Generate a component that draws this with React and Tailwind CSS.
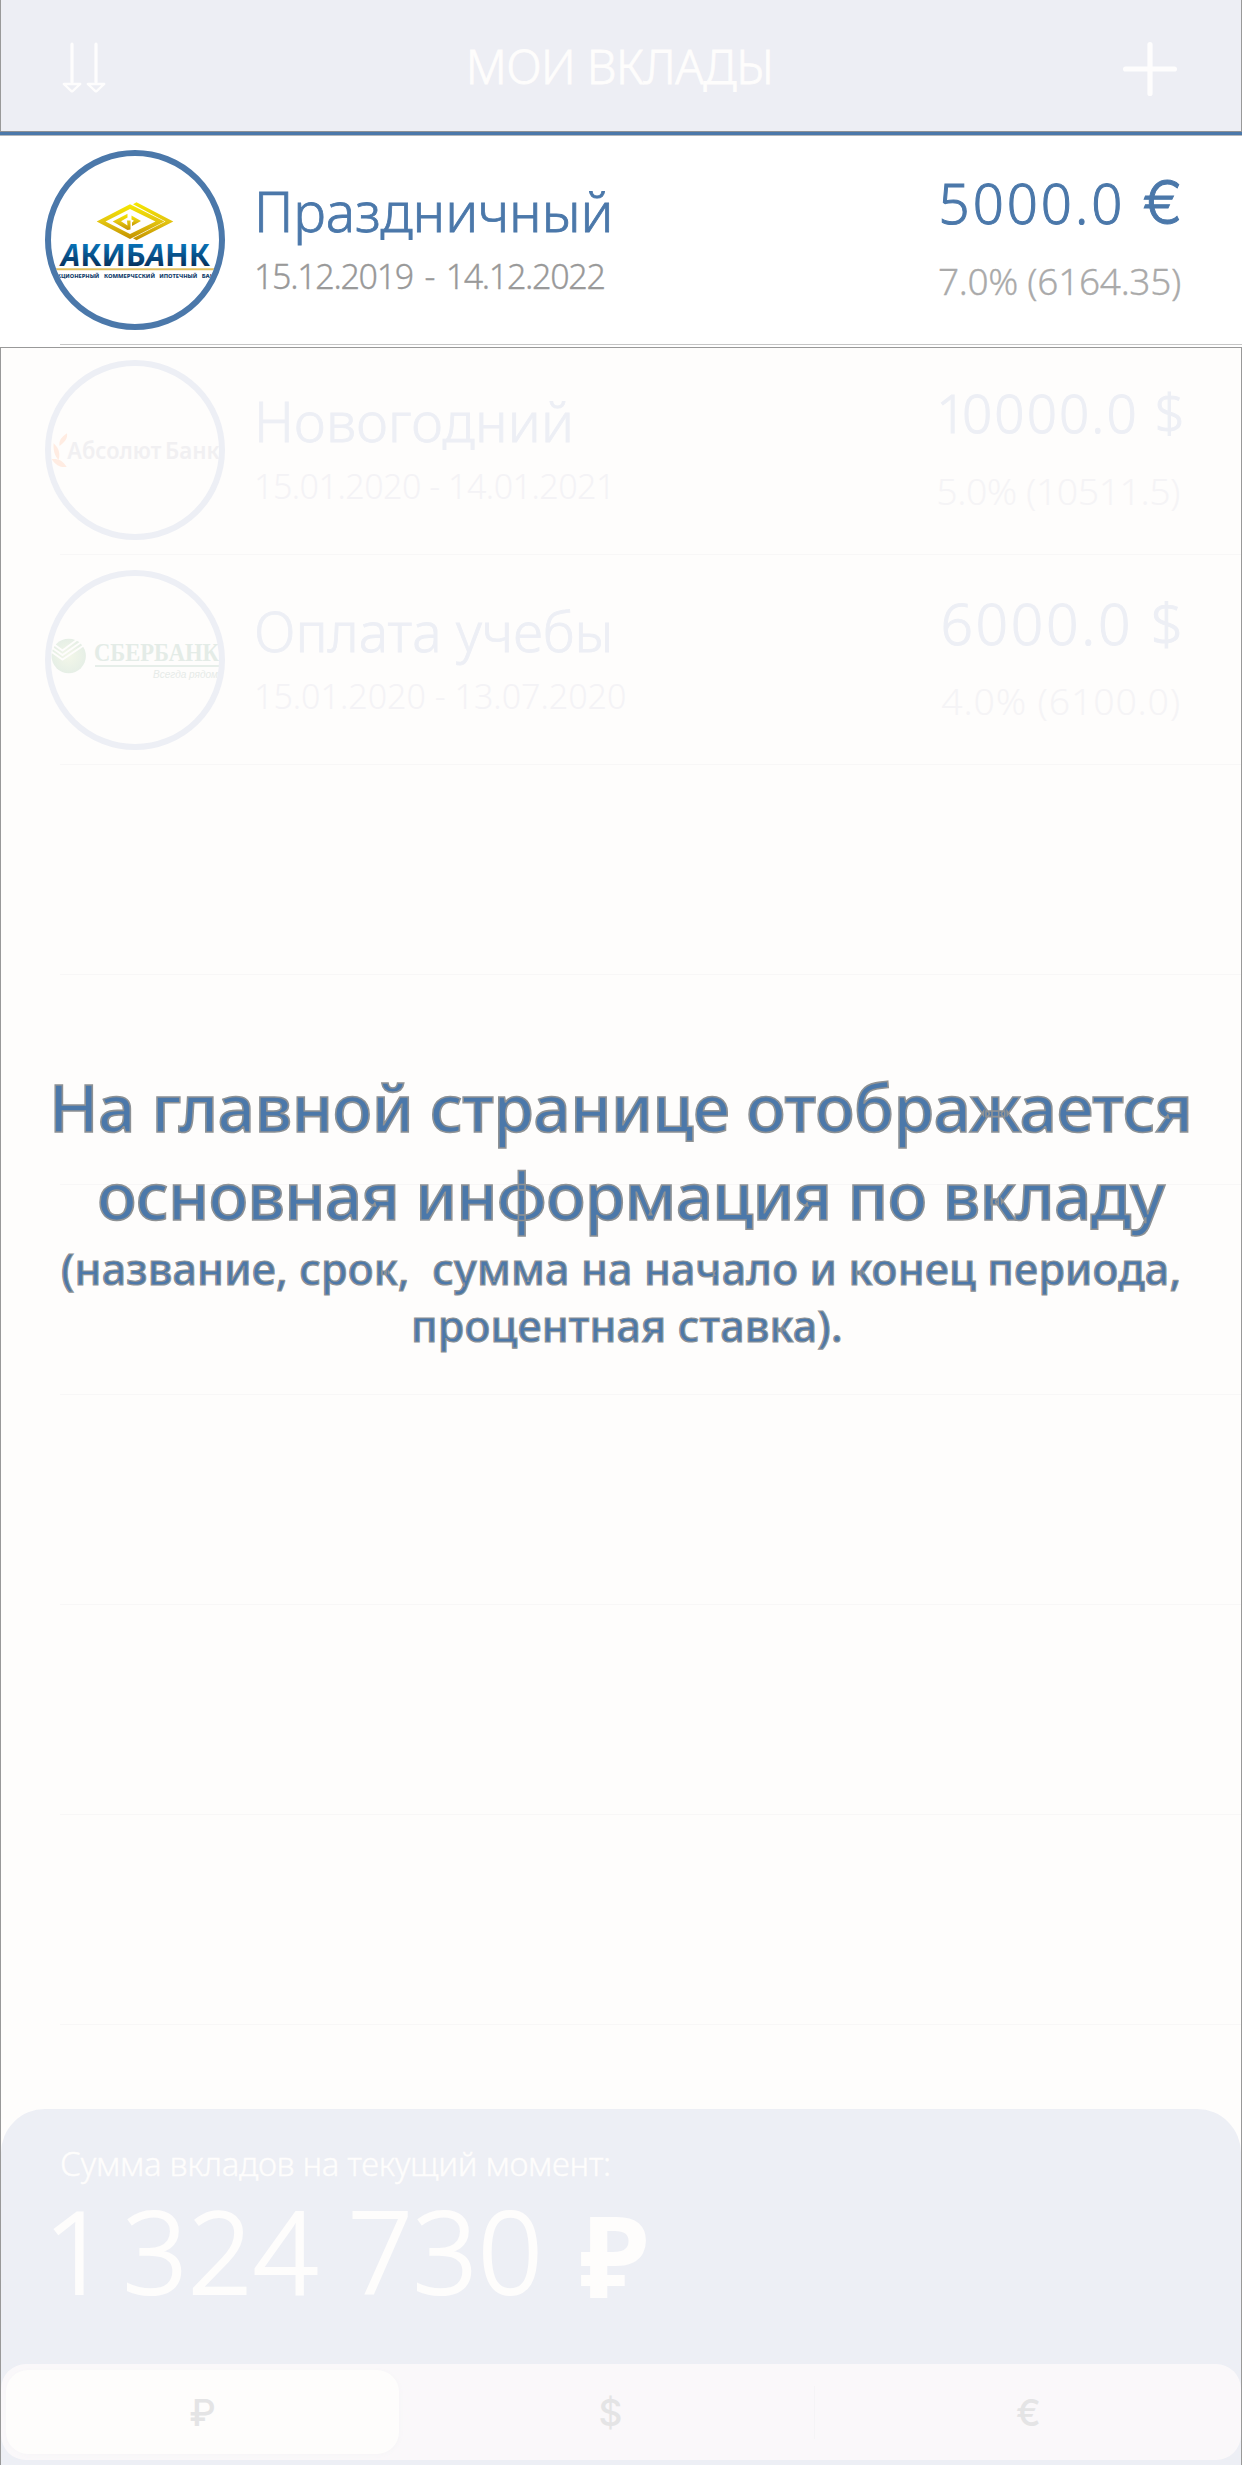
function SortIcon() {
  return (
    <svg className="h-[54px] w-[48px]" viewBox="0 0 48 54" fill="none" stroke="#fefdfd" strokeLinecap="round" strokeLinejoin="round">
      <path d="M12 4.2V42M36 4.2V42" strokeWidth="3.2" />
      <path d="M3.8 44H20.2L12.6 51.2H11.4ZM27.8 44H44.2L36.6 51.2H35.4Z" strokeWidth="2.4" />
    </svg>
  );
}

function PlusIcon() {
  return (
    <svg className="h-[54px] w-[54px]" viewBox="0 0 54 54" fill="none" stroke="#fefdfd" strokeWidth="5.2" strokeLinecap="round">
      <path d="M27 2.6V51.4M2.6 27H51.4" />
    </svg>
  );
}

function AkibankLogo() {
  return (
    <svg className="h-[180px] w-[180px]" viewBox="0 0 180 180">
      <defs>
        <linearGradient id="gold" x1="0" y1="0" x2="0" y2="1">
          <stop offset="0" stopColor="#f6e800" />
          <stop offset="0.5" stopColor="#e3c410" />
          <stop offset="1" stopColor="#c39100" />
        </linearGradient>
        <linearGradient id="navy" x1="0" y1="0" x2="0" y2="1">
          <stop offset="0.25" stopColor="#0873b8" />
          <stop offset="0.8" stopColor="#07305c" />
        </linearGradient>
        <clipPath id="disc"><circle cx="90" cy="90" r="84" /></clipPath>
      </defs>
      <g fill="url(#gold)" fillRule="evenodd">
        <path d="M51.7 71.6L85 54.3L119.5 71.6L85 89ZM60.5 71.6L85 84L110.5 71.6L85 59Z" />
        <path d="M88 54.3L91.5 52.3L128.3 71.6L91.5 90.3L88 88.3L120.5 71.6Z" />
        <path d="M67.7 71.6L82.5 63.8V67.5L76 71.3L82.5 75.5L82 70.5H85.5V79.5L82.5 80Z" />
        <path d="M86.5 65.5L96 71L87 76V72.5L89 70.8L86.5 69.5Z" />
      </g>
      <g clipPath="url(#disc)">
        <text x="16" y="115.7" textLength="149" lengthAdjust="spacingAndGlyphs" fill="url(#navy)" className="font-['Noto_Sans'] text-[29.5px] font-bold">
          <tspan className="italic">А</tspan>КИБ<tspan className="italic">А</tspan>НК
        </text>
        <path d="M6 119.3H174" stroke="#e2bf5c" strokeWidth="2" />
        <g fill="#12406b" className="font-['Noto_Sans'] text-[5.8px] font-extrabold">
          <text x="8" y="127.8" textLength="46.3" lengthAdjust="spacingAndGlyphs">АКЦИОНЕРНЫЙ</text>
          <text x="59" y="127.8" textLength="51" lengthAdjust="spacingAndGlyphs">КОММЕРЧЕСКИЙ</text>
          <text x="114.3" y="127.8" textLength="38" lengthAdjust="spacingAndGlyphs">ИПОТЕЧНЫЙ</text>
          <text x="156.7" y="127.8" textLength="17" lengthAdjust="spacingAndGlyphs">БАНК</text>
        </g>
      </g>
      <circle cx="90" cy="90" r="87" fill="none" stroke="#4b78aa" strokeWidth="6" />
    </svg>
  );
}

function AbsolutLogo() {
  return (
    <svg className="h-[180px] w-[180px] overflow-visible" viewBox="0 0 180 180">
      <g fill="#ffece2">
        <path d="M22 73.3C22.600 78 21 81 14.500 86C13.800 80.500 16 77.500 22 73.300Z" />
        <path d="M8.600 83.300C13.500 87.500 15.500 93 13.600 100C9.300 95.500 8.200 90 8.600 83.300Z" />
        <path d="M6.500 99C14 98.500 17.500 100.500 21.700 107C15 107.600 11 105.500 6.500 99Z" />
      </g>
      <g fill="#f1f0f2" className="font-['Noto_Sans'] text-[22.5px] font-semibold">
        <text x="22.3" y="99.3" textLength="94" lengthAdjust="spacingAndGlyphs">Абсолют</text>
        <text x="120" y="99.3" textLength="54.5" lengthAdjust="spacingAndGlyphs">Банк</text>
      </g>
      <circle cx="90" cy="90" r="87" fill="none" stroke="#edeff5" strokeWidth="6" />
    </svg>
  );
}

function SberbankLogo() {
  return (
    <svg className="h-[180px] w-[180px] overflow-visible" viewBox="0 0 180 180">
      <defs>
        <radialGradient id="leaf">
          <stop offset="0" stopColor="#f3f7e9" />
          <stop offset="1" stopColor="#e6efe6" />
        </radialGradient>
      </defs>
      <circle cx="23.7" cy="86" r="17.200" fill="url(#leaf)" />
      <g fill="none" stroke="#fefdfc" strokeWidth="2">
        <path d="M5 71.500L17.500 80.500L33 69M4 75.500L17.500 85L37 71.500M4 80L17.500 89.500L40 74.500" />
      </g>
      <text x="49" y="91" textLength="125" lengthAdjust="spacingAndGlyphs" fill="#e4ece7" className="font-['Liberation_Serif'] text-[25.5px] font-bold">СБЕРБАНК</text>
      <path d="M50 96H174" stroke="#e6eee9" strokeWidth="2" />
      <text x="108" y="108.3" textLength="65" lengthAdjust="spacingAndGlyphs" fill="#e6ebe8" className="font-['Liberation_Sans'] text-[11px] italic">Всегда рядом</text>
      <circle cx="90" cy="90" r="87" fill="none" stroke="#edeff5" strokeWidth="6" />
    </svg>
  );
}

function DepositRow({ logo, title, dates, amount, result, titleClass, datesClass, amountClass, resultClass, lineClass }) {
  return (
    <div className="flex h-[210px] flex-col whitespace-pre">
      <div className="flex h-[209px] pl-[45px] pr-[61px]">
        <div className="pt-[15px]">{logo}</div>
        <div className="ml-[29px] flex flex-1 flex-col pt-[46px]">
          <div className={"h-[60px] text-[55px] leading-[60px] " + titleClass}>{title}</div>
          <div className={"mt-[15px] h-10 text-[34px] leading-10 " + datesClass}>{dates}</div>
        </div>
        <div className="flex flex-col items-end pt-[38px]">
          <div className={"h-[60px] leading-[60px] " + amountClass}>{amount}</div>
          <div className={"mt-7 h-10 leading-10 " + resultClass}>{result}</div>
        </div>
      </div>
      <div className={"ml-[60px] h-px " + lineClass} />
    </div>
  );
}

export default function App() {
  return (
    <div className="relative flex h-[2465px] w-[1242px] flex-col overflow-hidden bg-[#fefdfc] font-['Noto_Sans',sans-serif] font-light">
      <header className="flex h-[131px] items-start justify-between border-x border-[#999999] bg-[#edeef4] pl-[59px] pr-[64px] pt-[40px]">
        <SortIcon />
        <h1 className="ml-[8px] h-[60px] text-[47px] leading-[53px] tracking-[-0.5px] text-[#fefdfc] [-webkit-text-stroke:0.8px_#fefdfc]">МОИ ВКЛАДЫ</h1>
        <div className="pt-[2px]"><PlusIcon /></div>
      </header>
      <div className="h-[4px] shrink-0 border-t border-[#8d9094] bg-[#4b78aa]" />
      <section className="h-[210px] shrink-0 bg-white shadow-[inset_0_1px_0_#b4b7bb]">
        <DepositRow
          logo={<AkibankLogo />}
          title="Праздничный"
          dates="15.12.2019 - 14.12.2022"
          amount={<>5000.0 <span className="font-['Inter'] text-[60px] leading-[50px] tracking-normal font-light">€</span></>}
          result="7.0% (6164.35)"
          titleClass="tracking-[-0.1px] text-[#4b78aa] [-webkit-text-stroke:0.8px_#4b78aa]"
          datesClass="tracking-[-1.3px] [word-spacing:4px] text-[#999999] [-webkit-text-stroke:0.3px_#999999]"
          amountClass="-mr-[2px] text-[54.5px] tracking-[3px] text-[#4b78aa] [-webkit-text-stroke:1px_#4b78aa]"
          resultClass="text-[37px] tracking-[-0.3px] text-[#aaaaaa] [-webkit-text-stroke:0.3px_#aaaaaa]"
          lineClass="bg-[#c6c6c6]"
        />
      </section>
      <div className="h-[2px] shrink-0 bg-white" />
      <main className="flex flex-1 flex-col border-x border-t border-[#999999]">
        <div className="-mt-[3px] ml-[-1px] flex flex-col">
          <DepositRow
            logo={<AbsolutLogo />}
            title="Новогодний"
            dates="15.01.2020 - 14.01.2021"
            amount={<><span className="tracking-[-4.5px]">1</span>0000.0 $</>}
            result="5.0% (10511.5)"
            titleClass="tracking-[0.2px] text-[#edeff5] [-webkit-text-stroke:0.8px_#edeff5]"
            datesClass="tracking-[-0.5px] text-[#f4f3f6]"
            amountClass="-mr-[7px] text-[53px] tracking-[2.1px] text-[#edeff5] [-webkit-text-stroke:1px_#edeff5]"
            resultClass="text-[37.5px] tracking-[-0.5px] text-[#f5f4f6]"
            lineClass="bg-[#f8f7f7]"
          />
          <DepositRow
            logo={<SberbankLogo />}
            title="Оплата учебы"
            dates="15.01.2020 - 13.07.2020"
            amount="6000.0 $"
            result="4.0% (6100.0)"
            titleClass="text-[#edeff5] [-webkit-text-stroke:0.8px_#edeff5]"
            datesClass="text-[#f4f3f6]"
            amountClass="-mr-[6px] text-[57px] tracking-[2.7px] text-[#edeff5] [-webkit-text-stroke:1px_#edeff5]"
            resultClass="-mr-[1px] text-[37.5px] tracking-[0.8px] text-[#f5f4f6]"
            lineClass="bg-[#f8f7f7]"
          />
          {[0, 1, 2, 3, 4, 5].map((i) => (
            <div key={i} className="flex h-[210px] flex-col justify-end pl-[60px]">
              <div className="h-px bg-[#f8f7f7]" />
            </div>
          ))}
        </div>
        <footer className="mt-auto flex h-[356px] flex-col rounded-t-[44px] bg-[#edeff5] text-[#fefdfc]">
          <div className="pl-[59px] pt-[35px] text-[33px] leading-10 tracking-[-0.35px] [-webkit-text-stroke:0.4px_#fefdfc]">Сумма вкладов на текущий момент:</div>
          <div className="flex h-[146px] pl-[43px] text-[114px] leading-[146px]">
            <div className="-mt-[7px] whitespace-pre [-webkit-text-stroke:2px_#fefdfc]"><span className="tracking-[-16px]">1</span> 324 730</div>
            <div className="ml-[37px] -mt-[3px] text-[113px] font-bold">₽</div>
          </div>
          <div className="mt-auto mb-[5px] flex h-[96px] items-center rounded-[25px] bg-[#faf8fa] p-[5px] font-['Inter'] text-[37px] font-medium text-[#e4e4e5]">
            <div className="flex h-[84px] w-[393px] items-center justify-center rounded-[22px] bg-[#fefdfc] pt-[2px] shadow-[1px_1px_4px_#f6f5f7]">₽</div>
            <div className="flex h-[53px] w-[416px] items-center justify-center border-r border-[#f5f4f6] pl-[8px] pt-[2px]">$</div>
            <div className="flex flex-1 items-center justify-center pl-[6px] pt-[2px]">€</div>
          </div>
        </footer>
      </main>
      <div className="absolute left-0 top-[1062px] whitespace-pre font-medium text-[#4b78aa]">
        <div className="text-[66px] leading-[88px] [-webkit-text-stroke:1.6px_#8f9294]">
          <div className="pl-[49px] tracking-[-0.56px]">На главной странице отображается</div>
          <div className="pl-[97px] tracking-[-0.9px]">основная информация по вкладу</div>
        </div>
        <div className="mt-[2px] text-[43px] leading-[57px] tracking-[0.16px] [-webkit-text-stroke:1.2px_#8f9294]">
          <div className="pl-[61px]">(название, срок,  сумма на начало и конец периода,</div>
          <div className="pl-[411px]">процентная ставка).</div>
        </div>
      </div>
    </div>
  );
}
